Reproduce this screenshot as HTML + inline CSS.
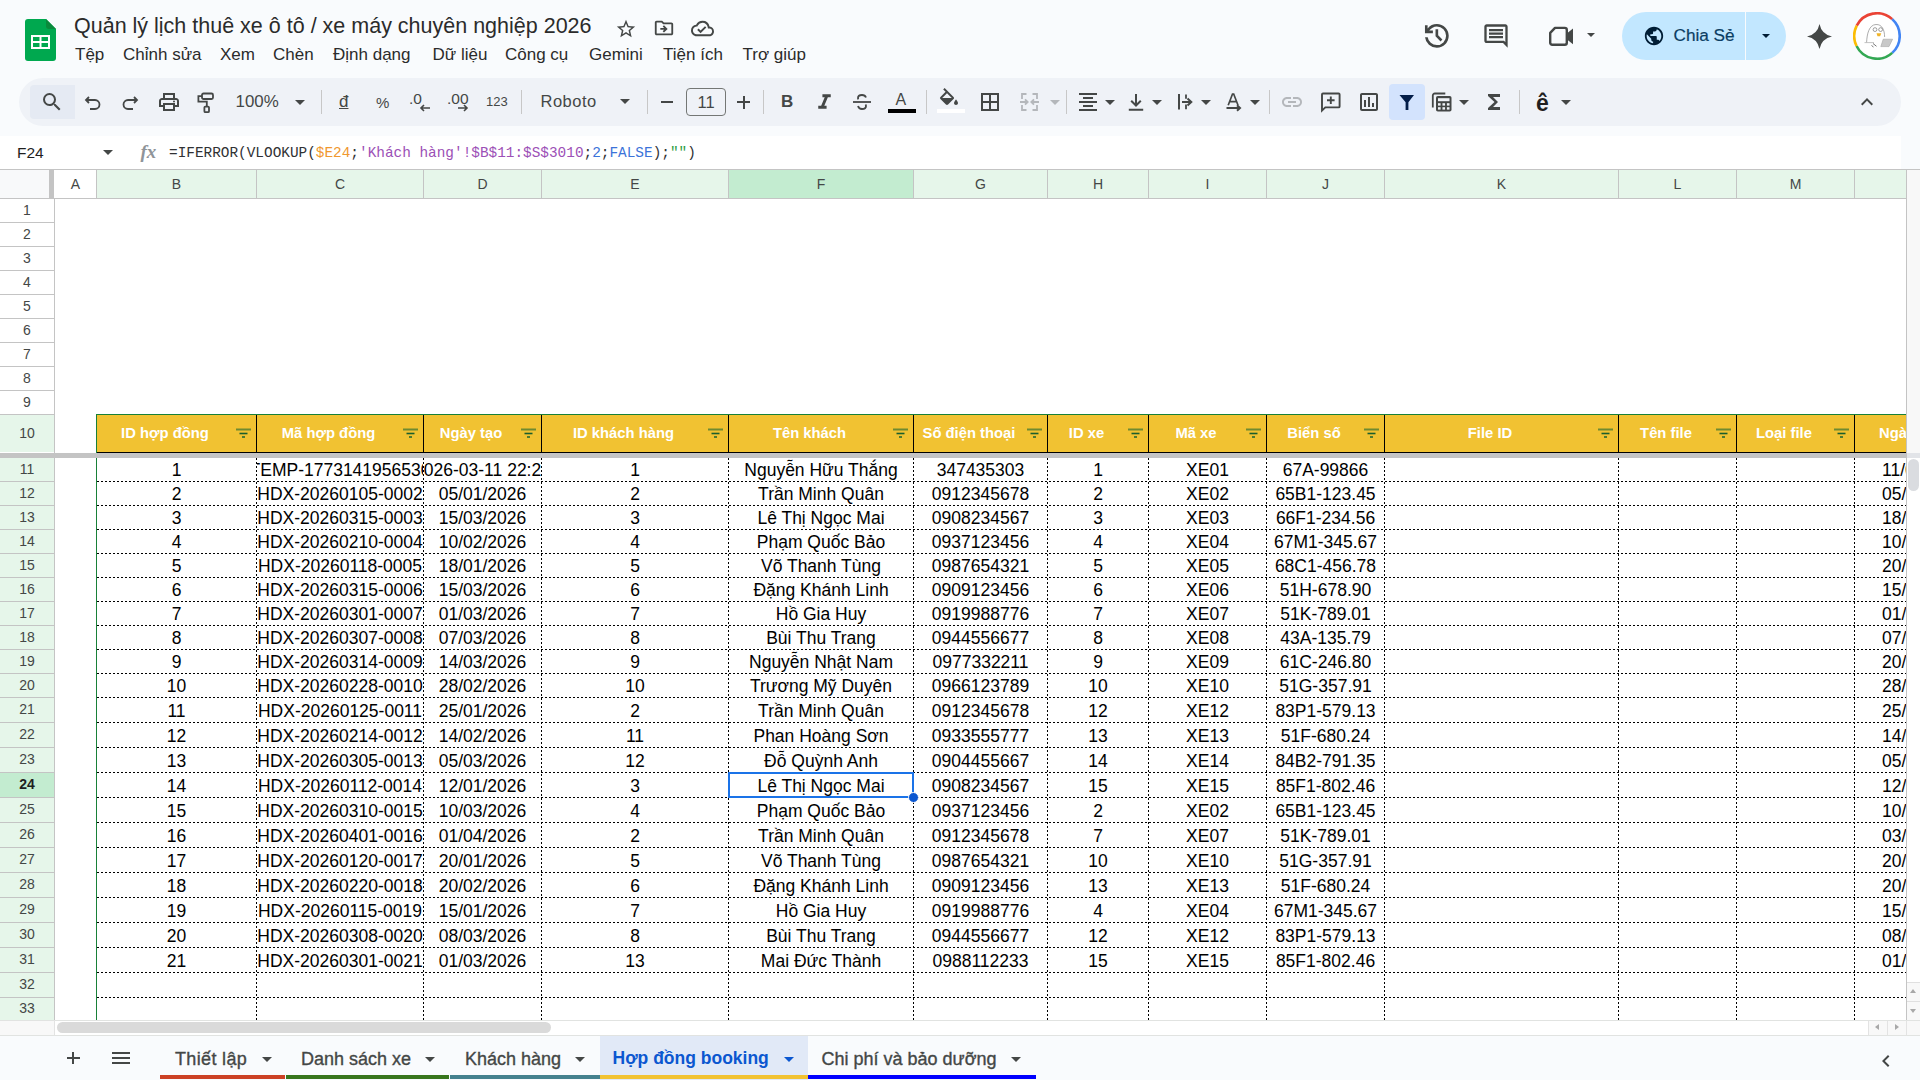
<!DOCTYPE html><html><head><meta charset="utf-8"><style>
*{margin:0;padding:0;box-sizing:border-box}
html,body{width:1920px;height:1080px;overflow:hidden;background:#f9fbfd;font-family:"Liberation Sans",sans-serif}
.t{position:absolute;white-space:nowrap;line-height:1}
.abs{position:absolute}
.c{position:absolute;overflow:hidden;white-space:nowrap;text-align:center;font-size:17.5px;color:#000;display:flex;align-items:center;justify-content:center}
.c span{display:block;flex:none;position:relative;top:1px}
.rh{position:absolute;left:0;width:54px;padding-bottom:2px;text-align:center;font-size:14px;color:#444746;display:flex;align-items:center;justify-content:center}
.ch{position:absolute;top:170px;height:28px;text-align:center;font-size:14px;color:#444746;display:flex;align-items:center;justify-content:center}
</style></head><body>

<svg class="abs" style="left:25px;top:19px" width="31" height="42" viewBox="0 0 31 42">
<path d="M3 0h18l10 10v29a3 3 0 0 1-3 3H3a3 3 0 0 1-3-3V3a3 3 0 0 1 3-3z" fill="#00a84f"/>
<path d="M21 0l10 10h-7a3 3 0 0 1-3-3z" fill="#0a8a3c"/>
<path d="M6 16h19v14H6z" fill="#fff"/>
<path d="M8 18h6.5v4H8zM16.5 18H23v4h-6.5zM8 24h6.5v4H8zM16.5 24H23v4h-6.5z" fill="#00a84f"/>
</svg>
<div class="t" style="left:74px;top:16.3px;font-size:21.5px;color:#2b2b2b;font-weight:normal;">Quản lý lịch thuê xe ô tô / xe máy chuyên nghiệp 2026</div>
<svg style="position:absolute;left:615px;top:18px" width="22" height="22" viewBox="0 0 24 24"><path fill="#444746" d="M22 9.24l-7.19-.62L12 2 9.19 8.63 2 9.24l5.46 4.73L5.82 21 12 17.27 18.18 21l-1.63-7.03L22 9.24zM12 15.4l-3.76 2.27 1-4.28-3.32-2.88 4.38-.38L12 6.1l1.71 4.04 4.38.38-3.32 2.88 1 4.28L12 15.4z"/></svg>
<svg style="position:absolute;left:653px;top:17px" width="22" height="22" viewBox="0 0 24 24"><path fill="#444746" d="M20 6h-8l-2-2H4c-1.1 0-1.99.9-1.99 2L2 18c0 1.1.9 2 2 2h16c1.1 0 2-.9 2-2V8c0-1.1-.9-2-2-2zm0 12H4V6h5.17l2 2H20v10zm-7.84-6H8v2h4.16l-1.59 1.59L11.99 17 16 13.01 11.99 9l-1.41 1.41L12.16 12z"/></svg>
<svg style="position:absolute;left:691px;top:17px" width="23" height="23" viewBox="0 0 24 24"><path fill="#444746" d="M19.35 10.04A7.49 7.49 0 0 0 12 4C9.11 4 6.6 5.64 5.35 8.04A5.994 5.994 0 0 0 0 14c0 3.31 2.69 6 6 6h13c2.76 0 5-2.24 5-5 0-2.64-2.05-4.78-4.65-4.96zM19 18H6c-2.21 0-4-1.79-4-4 0-2.05 1.53-3.76 3.56-3.97l1.07-.11.5-.95A5.469 5.469 0 0 1 12 6c2.62 0 4.88 1.86 5.39 4.43l.3 1.5 1.53.11A2.98 2.98 0 0 1 22 15c0 1.65-1.35 3-3 3zm-9-3.82l-2.09-2.09L6.5 13.5 10 17l6.01-6.01-1.41-1.41z"/></svg>
<div class="t" style="left:75px;top:46px;font-size:17px;color:#2b2b2b;font-weight:normal;">Tệp</div>
<div class="t" style="left:123px;top:46px;font-size:17px;color:#2b2b2b;font-weight:normal;">Chỉnh sửa</div>
<div class="t" style="left:220px;top:46px;font-size:17px;color:#2b2b2b;font-weight:normal;">Xem</div>
<div class="t" style="left:273px;top:46px;font-size:17px;color:#2b2b2b;font-weight:normal;">Chèn</div>
<div class="t" style="left:333px;top:46px;font-size:17px;color:#2b2b2b;font-weight:normal;">Định dạng</div>
<div class="t" style="left:432.5px;top:46px;font-size:17px;color:#2b2b2b;font-weight:normal;">Dữ liệu</div>
<div class="t" style="left:505px;top:46px;font-size:17px;color:#2b2b2b;font-weight:normal;">Công cụ</div>
<div class="t" style="left:589px;top:46px;font-size:17px;color:#2b2b2b;font-weight:normal;">Gemini</div>
<div class="t" style="left:663px;top:46px;font-size:17px;color:#2b2b2b;font-weight:normal;">Tiện ích</div>
<div class="t" style="left:742.5px;top:46px;font-size:17px;color:#2b2b2b;font-weight:normal;">Trợ giúp</div>
<svg class="abs" style="left:1421px;top:20px" width="31.7" height="31.7" viewBox="0 -960 960 960"><path fill="#444746" d="M480-120q-138 0-240.5-91.5T122-440h82q14 104 92.5 172T480-200q117 0 198.5-81.5T760-480q0-117-81.5-198.5T480-760q-69 0-129 32t-101 88h110v80H120v-240h80v94q51-64 124.5-99T480-840q75 0 140.5 28.5t114 77q48.5 48.5 77 114T840-480q0 75-28.5 140.5t-77 114q-48.5 48.5-114 77T480-120Zm112-192L440-464v-216h80v184l128 128-56 56Z"/></svg>
<svg style="position:absolute;left:1482px;top:22px" width="28" height="28" viewBox="0 0 24 24"><path fill="#444746" d="M21.99 4c0-1.1-.89-2-1.99-2H4c-1.1 0-2 .9-2 2v12c0 1.1.9 2 2 2h14l4 4-.01-18zM20 4v13.17L18.83 16H4V4h16zM6 12h12v2H6zm0-3h12v2H6zm0-3h12v2H6z"/></svg>
<svg style="position:absolute;left:1546px;top:21px" width="30" height="30" viewBox="0 0 24 24"><path fill="none" d="M18 10.48V6c0-1.1-.9-2-2-2H6.83l2 2H16v7.17l2 2v-1.65l4 3.98v-11l-4 3.98zM16 16L6 6 4.6 4.6 3.5 3.5 2.21 4.79 3 5.59V18c0 1.1.9 2 2 2h11c.28 0 .55-.06.79-.16l1.5 1.5 1.29-1.29L18 18.52 16 16zM5 18V7.59L15.41 18H5z"/></svg>
<svg class="abs" style="left:1546px;top:24px" width="30" height="24" viewBox="0 0 30 24"><path d="M9 3.9h9.8a2 2 0 0 1 2 2v12.9a2 2 0 0 1-2 2H6.2a2 2 0 0 1-2-2V8.9z" fill="none" stroke="#444746" stroke-width="2.4" stroke-linejoin="round"/><path d="M20.8 9.6 27 4.6v15.6l-6.2-5z" fill="#444746"/></svg>
<div style="position:absolute;left:1586.5px;top:32.75px;width:0;height:0;border-left:4.5px solid transparent;border-right:4.5px solid transparent;border-top:4.5px solid #444746"></div>
<div class="abs" style="left:1622px;top:12px;width:164px;height:48px;border-radius:24px;background:#c2e7ff"></div>
<div class="abs" style="left:1745px;top:12px;width:1px;height:48px;background:#f9fbfd"></div>
<svg style="position:absolute;left:1643px;top:25px" width="22" height="22" viewBox="0 0 24 24"><path fill="#001d35" d="M12 2C6.48 2 2 6.48 2 12s4.48 10 10 10 10-4.48 10-10S17.52 2 12 2zm-1 17.93c-3.95-.49-7-3.85-7-7.93 0-.62.08-1.21.21-1.79L9 15v1c0 1.1.9 2 2 2v1.93zm6.9-2.54c-.26-.81-1-1.39-1.9-1.39h-1v-3c0-.55-.45-1-1-1H8v-2h2c.55 0 1-.45 1-1V7h2c1.1 0 2-.9 2-2v-.41c2.93 1.19 5 4.06 5 7.41 0 2.08-.8 3.97-2.1 5.39z"/></svg>
<div class="t" style="left:1673.5px;top:27px;font-size:17.2px;color:#0b3d63;font-weight:normal;-webkit-text-stroke:0.2px #0b3d63">Chia Sẻ</div>
<div style="position:absolute;left:1761.5px;top:34.25px;width:0;height:0;border-left:4.5px solid transparent;border-right:4.5px solid transparent;border-top:4.5px solid #001d35"></div>
<svg class="abs" style="left:1807px;top:23.5px" width="25" height="25" viewBox="0 0 26 26"><path d="M13 0Q15.2 10.8 26 13Q15.2 15.2 13 26Q10.8 15.2 0 13Q10.8 10.8 13 0z" fill="#444746"/></svg>
<svg class="abs" style="left:1853px;top:12px" width="48" height="48" viewBox="0 0 48 48">
<circle cx="24" cy="24" r="21.5" fill="#fff"/>
<path d="M3.73 13.67A22.75 22.75 0 0 1 39.22 7.1" stroke="#ea4335" stroke-width="2.6" fill="none"/>
<path d="M39.22 7.1A22.75 22.75 0 0 1 39.22 40.9" stroke="#4285f4" stroke-width="2.6" fill="none"/>
<path d="M39.22 40.9A22.75 22.75 0 0 1 3.55 33.97" stroke="#34a853" stroke-width="2.6" fill="none"/>
<path d="M3.55 33.97A22.75 22.75 0 0 1 3.73 13.67" stroke="#fbbc04" stroke-width="2.6" fill="none"/>
<path d="M13.6 30.3C14 22 16 12.8 23 12.5 29 12.2 31.6 18 31.6 25" fill="none" stroke="#8a8a8a" stroke-width="0.7"/>
<path d="M11.5 30.6H21" stroke="#9a9a9a" stroke-width="0.6"/>
<circle cx="22" cy="17.6" r="1.9" fill="none" stroke="#777" stroke-width="0.7"/>
<circle cx="27.6" cy="17.6" r="1.9" fill="none" stroke="#777" stroke-width="0.7"/>
<path d="M23.5 21.2h4.8l-1.2 3h-2.6z" fill="#f0b429"/>
<path d="M30.2 27.2h9.4l-3.6 7.4h-8.2z" fill="#c8c8c8" stroke="#999" stroke-width="0.5"/>
<path d="M20 31.5l3.5 2.8M18.5 33.5l2 1.5" stroke="#666" stroke-width="0.9"/>
</svg>
<div class="abs" style="left:19px;top:78px;width:1882px;height:48px;border-radius:24px;background:#eff2f7"></div>
<div class="abs" style="left:30px;top:85px;width:45px;height:34px;border-radius:4px 0 0 4px;background:#e5eaf3"></div>
<svg style="position:absolute;left:40px;top:90px" width="24" height="24" viewBox="0 0 24 24"><path fill="#444746" d="M15.5 14h-.79l-.28-.27A6.471 6.471 0 0 0 16 9.5 6.5 6.5 0 1 0 9.5 16c1.61 0 3.09-.59 4.23-1.57l.27.28v.79l5 4.99L20.49 19l-4.99-5zm-6 0C7.01 14 5 11.99 5 9.5S7.01 5 9.5 5 14 7.01 14 9.5 11.99 14 9.5 14z"/></svg>
<svg class="abs" style="left:84px;top:95px" width="18" height="17" viewBox="0 0 18 17"><path d="M5 2L2 5l3 3" fill="none" stroke="#444746" stroke-width="1.8"/><path d="M2.5 5H11a4.5 4.5 0 0 1 0 9H6" fill="none" stroke="#444746" stroke-width="1.8"/></svg>
<svg class="abs" style="left:121px;top:95px" width="18" height="17" viewBox="0 0 18 17"><path d="M13 2l3 3-3 3" fill="none" stroke="#444746" stroke-width="1.8"/><path d="M15.5 5H7a4.5 4.5 0 0 0 0 9h5" fill="none" stroke="#444746" stroke-width="1.8"/></svg>
<svg style="position:absolute;left:157px;top:90px" width="24" height="24" viewBox="0 0 24 24"><path fill="#444746" d="M19 8h-1V3H6v5H5c-1.66 0-3 1.34-3 3v6h4v4h12v-4h4v-6c0-1.66-1.34-3-3-3zM8 5h8v3H8V5zm8 12v2H8v-4h8v2zm2-2v-2H6v2H4v-4c0-.55.45-1 1-1h14c.55 0 1 .45 1 1v4h-2z M18 11.5a1 1 0 1 1-2 0 1 1 0 0 1 2 0z"/></svg>
<svg class="abs" style="left:194px;top:88px" width="24" height="28" viewBox="0 0 24 28"><rect x="8" y="5.5" width="11" height="5.5" rx="1.5" fill="none" stroke="#444746" stroke-width="1.8"/><path d="M8 8.2H4.4v5.4h8.4v4.9" fill="none" stroke="#444746" stroke-width="1.8"/><rect x="10.4" y="18.6" width="4.6" height="5.6" rx="1" fill="none" stroke="#444746" stroke-width="1.8"/></svg>
<div class="t" style="left:235.5px;top:94px;font-size:16.9px;color:#444746;font-weight:normal;">100%</div>
<div style="position:absolute;left:295.0px;top:100.0px;width:0;height:0;border-left:5.0px solid transparent;border-right:5.0px solid transparent;border-top:5.0px solid #444746"></div>
<div class="abs" style="left:321px;top:90px;width:1px;height:24px;background:#c7c7c7"></div>
<div class="abs" style="left:521px;top:90px;width:1px;height:24px;background:#c7c7c7"></div>
<div class="abs" style="left:647px;top:90px;width:1px;height:24px;background:#c7c7c7"></div>
<div class="abs" style="left:763px;top:90px;width:1px;height:24px;background:#c7c7c7"></div>
<div class="abs" style="left:926px;top:90px;width:1px;height:24px;background:#c7c7c7"></div>
<div class="abs" style="left:1066px;top:90px;width:1px;height:24px;background:#c7c7c7"></div>
<div class="abs" style="left:1269px;top:90px;width:1px;height:24px;background:#c7c7c7"></div>
<div class="abs" style="left:1519px;top:90px;width:1px;height:24px;background:#c7c7c7"></div>
<div class="t" style="left:339px;top:93px;font-size:17px;color:#444746;font-weight:normal;"><span style="text-decoration:underline">đ</span></div>
<div class="t" style="left:376px;top:95px;font-size:15px;color:#444746;font-weight:normal;">%</div>
<div class="t" style="left:409px;top:91px;font-size:15.5px;color:#444746;font-weight:normal;">.0</div>
<svg class="abs" style="left:419px;top:103px" width="12" height="10" viewBox="0 0 12 10"><path d="M11 5H2M5 2L2 5l3 3" stroke="#444746" stroke-width="1.6" fill="none"/></svg>
<div class="t" style="left:447px;top:91px;font-size:15.5px;color:#444746;font-weight:normal;">.00</div>
<svg class="abs" style="left:457px;top:103px" width="12" height="10" viewBox="0 0 12 10"><path d="M1 5h9M7 2l3 3-3 3" stroke="#444746" stroke-width="1.6" fill="none"/></svg>
<div class="t" style="left:486px;top:95px;font-size:13px;color:#444746;font-weight:normal;">123</div>
<div class="t" style="left:540.5px;top:93px;font-size:16.5px;color:#444746;font-weight:normal;letter-spacing:0.5px">Roboto</div>
<div style="position:absolute;left:620.0px;top:99.0px;width:0;height:0;border-left:5.0px solid transparent;border-right:5.0px solid transparent;border-top:5.0px solid #444746"></div>
<div class="abs" style="left:661px;top:101px;width:12px;height:2px;background:#444746"></div>
<div class="abs" style="left:686px;top:88px;width:40px;height:28px;border:1px solid #747775;border-radius:4px"></div>
<div class="t" style="left:697.5px;top:94px;font-size:16.5px;color:#444746;font-weight:normal;">11</div>
<div class="abs" style="left:737px;top:101px;width:13px;height:2px;background:#444746"></div>
<div class="abs" style="left:742.5px;top:95.5px;width:2px;height:13px;background:#444746"></div>
<div class="t" style="left:781px;top:93px;font-size:17px;color:#444746;font-weight:bold;">B</div>
<svg style="position:absolute;left:812px;top:90.4px" width="25" height="25" viewBox="0 0 24 24"><path fill="#444746" d="M10 4v3h2.21l-3.42 8H6v3h8v-3h-2.21l3.42-8H18V4z"/></svg>
<svg class="abs" style="left:852px;top:92px" width="20" height="20" viewBox="0 0 20 20"><path d="M14 5.5c-.6-1.6-2-2.5-4-2.5-2.3 0-4 1.3-4 3 0 .5.1.9.3 1.3M6 14c.5 1.8 2 3 4 3 2.3 0 4-1.2 4-3 0-.6-.2-1.1-.5-1.5" stroke="#444746" stroke-width="1.8" fill="none"/><path d="M1 10h18" stroke="#444746" stroke-width="1.8"/></svg>
<div class="t" style="left:895.5px;top:92px;font-size:16px;color:#444746;font-weight:normal;">A</div>
<div class="abs" style="left:888px;top:109px;width:28px;height:4px;background:#000"></div>
<svg style="position:absolute;left:937px;top:88px" width="24" height="24" viewBox="0 0 24 24"><path fill="#444746" d="M16.56 8.94L7.62 0 6.21 1.41l2.38 2.38-5.15 5.15a1.49 1.49 0 0 0 0 2.12l5.5 5.5c.29.29.68.44 1.06.44s.77-.15 1.06-.44l5.5-5.5c.59-.58.59-1.53 0-2.12zM5.21 10L10 5.21 14.79 10H5.21zM19 11.5s-2 2.17-2 3.5c0 1.1.9 2 2 2s2-.9 2-2c0-1.33-2-3.5-2-3.5z"/></svg>
<div class="abs" style="left:937px;top:109px;width:28px;height:4px;background:#fff"></div>
<svg style="position:absolute;left:978px;top:90px" width="24" height="24" viewBox="0 0 24 24"><path fill="#444746" d="M3 3v18h18V3H3zm8 16H5v-6h6v6zm0-8H5V5h6v6zm8 8h-6v-6h6v6zm0-8h-6V5h6v6z"/></svg>
<svg class="abs" style="left:1018px;top:92px" width="24" height="20" viewBox="0 0 24 20"><path d="M4 7V2h4.5M4 13v5h4.5M19 7V2h-4.5M19 13v5h-4.5M2 10h7.5M7 7.3l2.7 2.7-2.7 2.7M21 10h-7.5M16 7.3l-2.7 2.7 2.7 2.7" fill="none" stroke="#b4b7bb" stroke-width="1.8"/></svg>
<div style="position:absolute;left:1050.0px;top:99.5px;width:0;height:0;border-left:5.0px solid transparent;border-right:5.0px solid transparent;border-top:5.0px solid #b4b7bb"></div>
<svg style="position:absolute;left:1076px;top:90px" width="24" height="24" viewBox="0 0 24 24"><path fill="#444746" d="M7 15v2h10v-2H7zm-4 6h18v-2H3v2zm0-8h18v-2H3v2zm4-6v2h10V7H7zM3 3v2h18V3H3z"/></svg>
<div style="position:absolute;left:1105.0px;top:99.5px;width:0;height:0;border-left:5.0px solid transparent;border-right:5.0px solid transparent;border-top:5.0px solid #444746"></div>
<svg class="abs" style="left:1124px;top:90px" width="24" height="24" viewBox="0 0 24 24"><path d="M12 4v11.5M7.2 10.8 12 15.5l4.8-4.7M4.8 19.8h14.4" fill="none" stroke="#444746" stroke-width="2"/></svg>
<div style="position:absolute;left:1152.0px;top:99.5px;width:0;height:0;border-left:5.0px solid transparent;border-right:5.0px solid transparent;border-top:5.0px solid #444746"></div>
<svg class="abs" style="left:1174px;top:90px" width="24" height="24" viewBox="0 0 24 24"><path d="M5 4v15.5" stroke="#444746" stroke-width="2"/><path d="M12 4.5v4.3M12 14.5v4.8" stroke="#444746" stroke-width="1.8"/><path d="M8 12h8.5M13.5 8.5 17.3 12l-3.8 3.5" fill="none" stroke="#444746" stroke-width="2"/></svg>
<div style="position:absolute;left:1201.0px;top:99.5px;width:0;height:0;border-left:5.0px solid transparent;border-right:5.0px solid transparent;border-top:5.0px solid #444746"></div>
<svg class="abs" style="left:1224px;top:90px" width="22" height="24" viewBox="0 0 22 24"><path d="M4.2 15.2 8.5 4h1.2l4.3 11.2M5.6 11.6h7" fill="none" stroke="#444746" stroke-width="1.7"/><path d="M2.5 18h12.5M13 15.3l3 2.7-3 2.7" fill="none" stroke="#444746" stroke-width="2"/></svg>
<div style="position:absolute;left:1250.0px;top:99.5px;width:0;height:0;border-left:5.0px solid transparent;border-right:5.0px solid transparent;border-top:5.0px solid #444746"></div>
<svg style="position:absolute;left:1280px;top:90px" width="24" height="24" viewBox="0 0 24 24"><path fill="#b4b7bb" d="M3.9 12c0-1.71 1.39-3.1 3.1-3.1h4V7H7c-2.76 0-5 2.24-5 5s2.24 5 5 5h4v-1.9H7c-1.71 0-3.1-1.39-3.1-3.1zM8 13h8v-2H8v2zm9-6h-4v1.9h4c1.71 0 3.1 1.39 3.1 3.1s-1.39 3.1-3.1 3.1h-4V17h4c2.76 0 5-2.24 5-5s-2.24-5-5-5z"/></svg>
<svg class="abs" style="left:1318px;top:90px" width="26" height="24" viewBox="0 0 26 24"><path d="M5 3.5h15.6a1 1 0 0 1 1 1v11.9a1 1 0 0 1-1 1H7.3L4 20.6V4.5a1 1 0 0 1 1-1z" fill="none" stroke="#444746" stroke-width="1.9"/><path d="M12.8 6.5v7.5M9 10.2h7.6" stroke="#444746" stroke-width="1.9"/></svg>
<svg style="position:absolute;left:1357px;top:90px" width="24" height="24" viewBox="0 0 24 24"><path fill="#444746" d="M19 3H5c-1.1 0-2 .9-2 2v14c0 1.1.9 2 2 2h14c1.1 0 2-.9 2-2V5c0-1.1-.9-2-2-2zm0 16H5V5h14v14zM7 10h2v7H7zm4-3h2v10h-2zm4 6h2v4h-2z"/></svg>
<div class="abs" style="left:1389px;top:84px;width:36px;height:36px;border-radius:4px;background:#d3e3fd"></div>
<svg class="abs" style="left:1397px;top:93px" width="20" height="18" viewBox="0 0 20 18"><path d="M2.5 2h14.5l-5.6 7.2V17H8.6V9.2z" fill="#041e49"/></svg>
<svg class="abs" style="left:1430px;top:91px" width="24" height="22" viewBox="0 0 24 22"><path d="M2.8 16.5V4.5a2 2 0 0 1 2-2h10.5" fill="none" stroke="#444746" stroke-width="1.8"/><rect x="6" y="5" width="15.5" height="15.5" rx="1.8" fill="#444746"/><rect x="8" y="7.2" width="11.5" height="3" fill="#eff2f7"/><rect x="8" y="12.2" width="2.6" height="2.4" fill="#eff2f7"/><rect x="12.45" y="12.2" width="2.6" height="2.4" fill="#eff2f7"/><rect x="16.9" y="12.2" width="2.6" height="2.4" fill="#eff2f7"/><rect x="8" y="16.2" width="2.6" height="2.4" fill="#eff2f7"/><rect x="12.45" y="16.2" width="2.6" height="2.4" fill="#eff2f7"/><rect x="16.9" y="16.2" width="2.6" height="2.4" fill="#eff2f7"/></svg>
<div style="position:absolute;left:1459.0px;top:99.5px;width:0;height:0;border-left:5.0px solid transparent;border-right:5.0px solid transparent;border-top:5.0px solid #444746"></div>
<svg style="position:absolute;left:1482px;top:90px" width="24" height="24" viewBox="0 0 24 24"><path fill="#444746" d="M18 4H6v2l6.5 6L6 18v2h12v-3h-7l5-5-5-5h7z"/></svg>
<div class="t" style="left:1536px;top:91.5px;font-size:23px;color:#1f1f1f;font-weight:bold;">ê</div>
<div style="position:absolute;left:1561.0px;top:99.5px;width:0;height:0;border-left:5.0px solid transparent;border-right:5.0px solid transparent;border-top:5.0px solid #444746"></div>
<svg style="position:absolute;left:1855px;top:90px" width="24" height="24" viewBox="0 0 24 24"><path fill="#444746" d="M12 8l-6 6 1.41 1.41L12 10.83l4.59 4.58L18 14z"/></svg>
<div class="abs" style="left:0;top:136px;width:1901px;height:33px;background:#fff"></div>
<div class="t" style="left:17px;top:145px;font-size:15.5px;color:#1f1f1f;font-weight:normal;">F24</div>
<div style="position:absolute;left:102.5px;top:150.0px;width:0;height:0;border-left:5.0px solid transparent;border-right:5.0px solid transparent;border-top:5.0px solid #444746"></div>
<div class="t" style="left:140.5px;top:142px;font-size:19px;color:#8f9499;font-weight:bold;font-family:'Liberation Serif',serif"><i>fx</i></div>
<div class="t" style="left:169px;top:145.7px;font-size:14.4px;color:#1f1f1f;font-weight:normal;font-family:'Liberation Mono',monospace"><span style="color:#303134">=IFERROR(VLOOKUP(</span><span style="color:#f0982f">$E24</span><span style="color:#303134">;</span><span style="color:#9c50b6">'Khách hàng'!$B$11:$S$3010</span><span style="color:#303134">;</span><span style="color:#3b73d9">2</span><span style="color:#303134">;</span><span style="color:#3b73d9">FALSE</span><span style="color:#303134">);</span><span style="color:#2f9e44">""</span><span style="color:#303134">)</span></div>
<div class="abs" style="left:0;top:169px;width:1906px;height:851px;background:#fff"></div>
<div class="abs" style="left:0;top:170px;width:49px;height:28px;background:#f8f9fa"></div>
<div class="abs" style="left:49px;top:170px;width:5px;height:28px;background:#c4c4c4"></div>
<div class="abs" style="left:0;top:169px;width:1920px;height:1px;background:#c4c4c4"></div>
<div class="abs" style="left:0;top:198px;width:1906px;height:1px;background:#c4c4c4"></div>
<div class="ch" style="left:55px;width:41px;background:#fff">A</div>
<div class="abs" style="left:96px;top:170px;width:1px;height:28px;background:#c4c4c4"></div>
<div class="ch" style="left:97px;width:159px;background:#e6f6ea">B</div>
<div class="abs" style="left:256px;top:170px;width:1px;height:28px;background:#c4c4c4"></div>
<div class="ch" style="left:257px;width:166px;background:#e6f6ea">C</div>
<div class="abs" style="left:423px;top:170px;width:1px;height:28px;background:#c4c4c4"></div>
<div class="ch" style="left:424px;width:117px;background:#e6f6ea">D</div>
<div class="abs" style="left:541px;top:170px;width:1px;height:28px;background:#c4c4c4"></div>
<div class="ch" style="left:542px;width:186px;background:#e6f6ea">E</div>
<div class="abs" style="left:728px;top:170px;width:1px;height:28px;background:#c4c4c4"></div>
<div class="ch" style="left:729px;width:184px;background:#c3ecd0">F</div>
<div class="abs" style="left:913px;top:170px;width:1px;height:28px;background:#c4c4c4"></div>
<div class="ch" style="left:914px;width:133px;background:#e6f6ea">G</div>
<div class="abs" style="left:1047px;top:170px;width:1px;height:28px;background:#c4c4c4"></div>
<div class="ch" style="left:1048px;width:100px;background:#e6f6ea">H</div>
<div class="abs" style="left:1148px;top:170px;width:1px;height:28px;background:#c4c4c4"></div>
<div class="ch" style="left:1149px;width:117px;background:#e6f6ea">I</div>
<div class="abs" style="left:1266px;top:170px;width:1px;height:28px;background:#c4c4c4"></div>
<div class="ch" style="left:1267px;width:117px;background:#e6f6ea">J</div>
<div class="abs" style="left:1384px;top:170px;width:1px;height:28px;background:#c4c4c4"></div>
<div class="ch" style="left:1385px;width:233px;background:#e6f6ea">K</div>
<div class="abs" style="left:1618px;top:170px;width:1px;height:28px;background:#c4c4c4"></div>
<div class="ch" style="left:1619px;width:117px;background:#e6f6ea">L</div>
<div class="abs" style="left:1736px;top:170px;width:1px;height:28px;background:#c4c4c4"></div>
<div class="ch" style="left:1737px;width:117px;background:#e6f6ea">M</div>
<div class="abs" style="left:1854px;top:170px;width:1px;height:28px;background:#c4c4c4"></div>
<div class="ch" style="left:1855px;width:51px;background:#e6f6ea"></div>
<div class="abs" style="left:1906px;top:170px;width:1px;height:28px;background:#c4c4c4"></div>
<div class="rh" style="top:199px;height:23px;background:#fff;font-weight:normal;color:#444746">1</div>
<div class="abs" style="left:0;top:222px;width:54px;height:1px;background:#c4c4c4"></div>
<div class="rh" style="top:223px;height:23px;background:#fff;font-weight:normal;color:#444746">2</div>
<div class="abs" style="left:0;top:246px;width:54px;height:1px;background:#c4c4c4"></div>
<div class="rh" style="top:247px;height:23px;background:#fff;font-weight:normal;color:#444746">3</div>
<div class="abs" style="left:0;top:270px;width:54px;height:1px;background:#c4c4c4"></div>
<div class="rh" style="top:271px;height:23px;background:#fff;font-weight:normal;color:#444746">4</div>
<div class="abs" style="left:0;top:294px;width:54px;height:1px;background:#c4c4c4"></div>
<div class="rh" style="top:295px;height:23px;background:#fff;font-weight:normal;color:#444746">5</div>
<div class="abs" style="left:0;top:318px;width:54px;height:1px;background:#c4c4c4"></div>
<div class="rh" style="top:319px;height:23px;background:#fff;font-weight:normal;color:#444746">6</div>
<div class="abs" style="left:0;top:342px;width:54px;height:1px;background:#c4c4c4"></div>
<div class="rh" style="top:343px;height:23px;background:#fff;font-weight:normal;color:#444746">7</div>
<div class="abs" style="left:0;top:366px;width:54px;height:1px;background:#c4c4c4"></div>
<div class="rh" style="top:367px;height:23px;background:#fff;font-weight:normal;color:#444746">8</div>
<div class="abs" style="left:0;top:390px;width:54px;height:1px;background:#c4c4c4"></div>
<div class="rh" style="top:391px;height:23px;background:#fff;font-weight:normal;color:#444746">9</div>
<div class="abs" style="left:0;top:414px;width:54px;height:1px;background:#c4c4c4"></div>
<div class="rh" style="top:415px;height:37px;background:#e6f6ea;font-weight:normal;color:#444746">10</div>
<div class="rh" style="top:458px;height:23px;background:#e6f6ea;font-weight:normal;color:#444746">11</div>
<div class="abs" style="left:0;top:481px;width:54px;height:1px;background:#c4c4c4"></div>
<div class="rh" style="top:482px;height:23px;background:#e6f6ea;font-weight:normal;color:#444746">12</div>
<div class="abs" style="left:0;top:505px;width:54px;height:1px;background:#c4c4c4"></div>
<div class="rh" style="top:506px;height:23px;background:#e6f6ea;font-weight:normal;color:#444746">13</div>
<div class="abs" style="left:0;top:529px;width:54px;height:1px;background:#c4c4c4"></div>
<div class="rh" style="top:530px;height:23px;background:#e6f6ea;font-weight:normal;color:#444746">14</div>
<div class="abs" style="left:0;top:553px;width:54px;height:1px;background:#c4c4c4"></div>
<div class="rh" style="top:554px;height:23px;background:#e6f6ea;font-weight:normal;color:#444746">15</div>
<div class="abs" style="left:0;top:577px;width:54px;height:1px;background:#c4c4c4"></div>
<div class="rh" style="top:578px;height:23px;background:#e6f6ea;font-weight:normal;color:#444746">16</div>
<div class="abs" style="left:0;top:601px;width:54px;height:1px;background:#c4c4c4"></div>
<div class="rh" style="top:602px;height:23px;background:#e6f6ea;font-weight:normal;color:#444746">17</div>
<div class="abs" style="left:0;top:625px;width:54px;height:1px;background:#c4c4c4"></div>
<div class="rh" style="top:626px;height:23px;background:#e6f6ea;font-weight:normal;color:#444746">18</div>
<div class="abs" style="left:0;top:649px;width:54px;height:1px;background:#c4c4c4"></div>
<div class="rh" style="top:650px;height:23px;background:#e6f6ea;font-weight:normal;color:#444746">19</div>
<div class="abs" style="left:0;top:673px;width:54px;height:1px;background:#c4c4c4"></div>
<div class="rh" style="top:674px;height:23px;background:#e6f6ea;font-weight:normal;color:#444746">20</div>
<div class="abs" style="left:0;top:697px;width:54px;height:1px;background:#c4c4c4"></div>
<div class="rh" style="top:698px;height:24px;background:#e6f6ea;font-weight:normal;color:#444746">21</div>
<div class="abs" style="left:0;top:722px;width:54px;height:1px;background:#c4c4c4"></div>
<div class="rh" style="top:723px;height:24px;background:#e6f6ea;font-weight:normal;color:#444746">22</div>
<div class="abs" style="left:0;top:747px;width:54px;height:1px;background:#c4c4c4"></div>
<div class="rh" style="top:748px;height:24px;background:#e6f6ea;font-weight:normal;color:#444746">23</div>
<div class="abs" style="left:0;top:772px;width:54px;height:1px;background:#c4c4c4"></div>
<div class="rh" style="top:773px;height:24px;background:#c3ecd0;font-weight:bold;color:#1f1f1f">24</div>
<div class="abs" style="left:0;top:797px;width:54px;height:1px;background:#c4c4c4"></div>
<div class="rh" style="top:798px;height:24px;background:#e6f6ea;font-weight:normal;color:#444746">25</div>
<div class="abs" style="left:0;top:822px;width:54px;height:1px;background:#c4c4c4"></div>
<div class="rh" style="top:823px;height:24px;background:#e6f6ea;font-weight:normal;color:#444746">26</div>
<div class="abs" style="left:0;top:847px;width:54px;height:1px;background:#c4c4c4"></div>
<div class="rh" style="top:848px;height:24px;background:#e6f6ea;font-weight:normal;color:#444746">27</div>
<div class="abs" style="left:0;top:872px;width:54px;height:1px;background:#c4c4c4"></div>
<div class="rh" style="top:873px;height:24px;background:#e6f6ea;font-weight:normal;color:#444746">28</div>
<div class="abs" style="left:0;top:897px;width:54px;height:1px;background:#c4c4c4"></div>
<div class="rh" style="top:898px;height:24px;background:#e6f6ea;font-weight:normal;color:#444746">29</div>
<div class="abs" style="left:0;top:922px;width:54px;height:1px;background:#c4c4c4"></div>
<div class="rh" style="top:923px;height:24px;background:#e6f6ea;font-weight:normal;color:#444746">30</div>
<div class="abs" style="left:0;top:947px;width:54px;height:1px;background:#c4c4c4"></div>
<div class="rh" style="top:948px;height:24px;background:#e6f6ea;font-weight:normal;color:#444746">31</div>
<div class="abs" style="left:0;top:972px;width:54px;height:1px;background:#c4c4c4"></div>
<div class="rh" style="top:973px;height:24px;background:#e6f6ea;font-weight:normal;color:#444746">32</div>
<div class="abs" style="left:0;top:997px;width:54px;height:1px;background:#c4c4c4"></div>
<div class="rh" style="top:998px;height:22px;background:#e6f6ea;font-weight:normal;color:#444746">33</div>
<div class="abs" style="left:54px;top:199px;width:1px;height:821px;background:#c4c4c4"></div>
<div class="abs" style="left:97px;top:415px;width:159px;height:37px;background:#f1c232"></div>
<div class="abs" style="left:97px;top:415px;width:136px;height:37px;overflow:hidden;display:flex;align-items:center;justify-content:center;color:#fff;font-weight:bold;font-size:14.8px;white-space:nowrap"><span style="flex:none;position:relative;top:-1px">ID hợp đồng</span></div>
<svg class="abs" style="left:236px;top:428px" width="16" height="11" viewBox="0 0 16 11"><path d="M0 1.5h15" stroke="#6f8a30" stroke-width="2"/><path d="M3.5 5.5h8" stroke="#1b5e2c" stroke-width="1.6"/><path d="M6 9h3" stroke="#2a6a30" stroke-width="1.6"/></svg>
<div class="abs" style="left:256px;top:415px;width:1px;height:37px;background:#000"></div>
<div class="abs" style="left:257px;top:415px;width:166px;height:37px;background:#f1c232"></div>
<div class="abs" style="left:257px;top:415px;width:143px;height:37px;overflow:hidden;display:flex;align-items:center;justify-content:center;color:#fff;font-weight:bold;font-size:14.8px;white-space:nowrap"><span style="flex:none;position:relative;top:-1px">Mã hợp đồng</span></div>
<svg class="abs" style="left:403px;top:428px" width="16" height="11" viewBox="0 0 16 11"><path d="M0 1.5h15" stroke="#6f8a30" stroke-width="2"/><path d="M3.5 5.5h8" stroke="#1b5e2c" stroke-width="1.6"/><path d="M6 9h3" stroke="#2a6a30" stroke-width="1.6"/></svg>
<div class="abs" style="left:423px;top:415px;width:1px;height:37px;background:#000"></div>
<div class="abs" style="left:424px;top:415px;width:117px;height:37px;background:#f1c232"></div>
<div class="abs" style="left:424px;top:415px;width:94px;height:37px;overflow:hidden;display:flex;align-items:center;justify-content:center;color:#fff;font-weight:bold;font-size:14.8px;white-space:nowrap"><span style="flex:none;position:relative;top:-1px">Ngày tạo</span></div>
<svg class="abs" style="left:521px;top:428px" width="16" height="11" viewBox="0 0 16 11"><path d="M0 1.5h15" stroke="#6f8a30" stroke-width="2"/><path d="M3.5 5.5h8" stroke="#1b5e2c" stroke-width="1.6"/><path d="M6 9h3" stroke="#2a6a30" stroke-width="1.6"/></svg>
<div class="abs" style="left:541px;top:415px;width:1px;height:37px;background:#000"></div>
<div class="abs" style="left:542px;top:415px;width:186px;height:37px;background:#f1c232"></div>
<div class="abs" style="left:542px;top:415px;width:163px;height:37px;overflow:hidden;display:flex;align-items:center;justify-content:center;color:#fff;font-weight:bold;font-size:14.8px;white-space:nowrap"><span style="flex:none;position:relative;top:-1px">ID khách hàng</span></div>
<svg class="abs" style="left:708px;top:428px" width="16" height="11" viewBox="0 0 16 11"><path d="M0 1.5h15" stroke="#6f8a30" stroke-width="2"/><path d="M3.5 5.5h8" stroke="#1b5e2c" stroke-width="1.6"/><path d="M6 9h3" stroke="#2a6a30" stroke-width="1.6"/></svg>
<div class="abs" style="left:728px;top:415px;width:1px;height:37px;background:#000"></div>
<div class="abs" style="left:729px;top:415px;width:184px;height:37px;background:#f1c232"></div>
<div class="abs" style="left:729px;top:415px;width:161px;height:37px;overflow:hidden;display:flex;align-items:center;justify-content:center;color:#fff;font-weight:bold;font-size:14.8px;white-space:nowrap"><span style="flex:none;position:relative;top:-1px">Tên khách</span></div>
<svg class="abs" style="left:893px;top:428px" width="16" height="11" viewBox="0 0 16 11"><path d="M0 1.5h15" stroke="#6f8a30" stroke-width="2"/><path d="M3.5 5.5h8" stroke="#1b5e2c" stroke-width="1.6"/><path d="M6 9h3" stroke="#2a6a30" stroke-width="1.6"/></svg>
<div class="abs" style="left:913px;top:415px;width:1px;height:37px;background:#000"></div>
<div class="abs" style="left:914px;top:415px;width:133px;height:37px;background:#f1c232"></div>
<div class="abs" style="left:914px;top:415px;width:110px;height:37px;overflow:hidden;display:flex;align-items:center;justify-content:center;color:#fff;font-weight:bold;font-size:14.8px;white-space:nowrap"><span style="flex:none;position:relative;top:-1px">Số điện thoại</span></div>
<svg class="abs" style="left:1027px;top:428px" width="16" height="11" viewBox="0 0 16 11"><path d="M0 1.5h15" stroke="#6f8a30" stroke-width="2"/><path d="M3.5 5.5h8" stroke="#1b5e2c" stroke-width="1.6"/><path d="M6 9h3" stroke="#2a6a30" stroke-width="1.6"/></svg>
<div class="abs" style="left:1047px;top:415px;width:1px;height:37px;background:#000"></div>
<div class="abs" style="left:1048px;top:415px;width:100px;height:37px;background:#f1c232"></div>
<div class="abs" style="left:1048px;top:415px;width:77px;height:37px;overflow:hidden;display:flex;align-items:center;justify-content:center;color:#fff;font-weight:bold;font-size:14.8px;white-space:nowrap"><span style="flex:none;position:relative;top:-1px">ID xe</span></div>
<svg class="abs" style="left:1128px;top:428px" width="16" height="11" viewBox="0 0 16 11"><path d="M0 1.5h15" stroke="#6f8a30" stroke-width="2"/><path d="M3.5 5.5h8" stroke="#1b5e2c" stroke-width="1.6"/><path d="M6 9h3" stroke="#2a6a30" stroke-width="1.6"/></svg>
<div class="abs" style="left:1148px;top:415px;width:1px;height:37px;background:#000"></div>
<div class="abs" style="left:1149px;top:415px;width:117px;height:37px;background:#f1c232"></div>
<div class="abs" style="left:1149px;top:415px;width:94px;height:37px;overflow:hidden;display:flex;align-items:center;justify-content:center;color:#fff;font-weight:bold;font-size:14.8px;white-space:nowrap"><span style="flex:none;position:relative;top:-1px">Mã xe</span></div>
<svg class="abs" style="left:1246px;top:428px" width="16" height="11" viewBox="0 0 16 11"><path d="M0 1.5h15" stroke="#6f8a30" stroke-width="2"/><path d="M3.5 5.5h8" stroke="#1b5e2c" stroke-width="1.6"/><path d="M6 9h3" stroke="#2a6a30" stroke-width="1.6"/></svg>
<div class="abs" style="left:1266px;top:415px;width:1px;height:37px;background:#000"></div>
<div class="abs" style="left:1267px;top:415px;width:117px;height:37px;background:#f1c232"></div>
<div class="abs" style="left:1267px;top:415px;width:94px;height:37px;overflow:hidden;display:flex;align-items:center;justify-content:center;color:#fff;font-weight:bold;font-size:14.8px;white-space:nowrap"><span style="flex:none;position:relative;top:-1px">Biển số</span></div>
<svg class="abs" style="left:1364px;top:428px" width="16" height="11" viewBox="0 0 16 11"><path d="M0 1.5h15" stroke="#6f8a30" stroke-width="2"/><path d="M3.5 5.5h8" stroke="#1b5e2c" stroke-width="1.6"/><path d="M6 9h3" stroke="#2a6a30" stroke-width="1.6"/></svg>
<div class="abs" style="left:1384px;top:415px;width:1px;height:37px;background:#000"></div>
<div class="abs" style="left:1385px;top:415px;width:233px;height:37px;background:#f1c232"></div>
<div class="abs" style="left:1385px;top:415px;width:210px;height:37px;overflow:hidden;display:flex;align-items:center;justify-content:center;color:#fff;font-weight:bold;font-size:14.8px;white-space:nowrap"><span style="flex:none;position:relative;top:-1px">File ID</span></div>
<svg class="abs" style="left:1598px;top:428px" width="16" height="11" viewBox="0 0 16 11"><path d="M0 1.5h15" stroke="#6f8a30" stroke-width="2"/><path d="M3.5 5.5h8" stroke="#1b5e2c" stroke-width="1.6"/><path d="M6 9h3" stroke="#2a6a30" stroke-width="1.6"/></svg>
<div class="abs" style="left:1618px;top:415px;width:1px;height:37px;background:#000"></div>
<div class="abs" style="left:1619px;top:415px;width:117px;height:37px;background:#f1c232"></div>
<div class="abs" style="left:1619px;top:415px;width:94px;height:37px;overflow:hidden;display:flex;align-items:center;justify-content:center;color:#fff;font-weight:bold;font-size:14.8px;white-space:nowrap"><span style="flex:none;position:relative;top:-1px">Tên file</span></div>
<svg class="abs" style="left:1716px;top:428px" width="16" height="11" viewBox="0 0 16 11"><path d="M0 1.5h15" stroke="#6f8a30" stroke-width="2"/><path d="M3.5 5.5h8" stroke="#1b5e2c" stroke-width="1.6"/><path d="M6 9h3" stroke="#2a6a30" stroke-width="1.6"/></svg>
<div class="abs" style="left:1736px;top:415px;width:1px;height:37px;background:#000"></div>
<div class="abs" style="left:1737px;top:415px;width:117px;height:37px;background:#f1c232"></div>
<div class="abs" style="left:1737px;top:415px;width:94px;height:37px;overflow:hidden;display:flex;align-items:center;justify-content:center;color:#fff;font-weight:bold;font-size:14.8px;white-space:nowrap"><span style="flex:none;position:relative;top:-1px">Loại file</span></div>
<svg class="abs" style="left:1834px;top:428px" width="16" height="11" viewBox="0 0 16 11"><path d="M0 1.5h15" stroke="#6f8a30" stroke-width="2"/><path d="M3.5 5.5h8" stroke="#1b5e2c" stroke-width="1.6"/><path d="M6 9h3" stroke="#2a6a30" stroke-width="1.6"/></svg>
<div class="abs" style="left:1854px;top:415px;width:1px;height:37px;background:#000"></div>
<div class="abs" style="left:1855px;top:415px;width:51px;height:37px;background:#f1c232"></div>
<div class="abs" style="left:1855px;top:415px;width:51px;height:37px;overflow:hidden;display:flex;align-items:center;justify-content:flex-start;color:#fff;font-weight:bold;font-size:14.8px;white-space:nowrap"><span style="flex:none;padding-left:24px;position:relative;top:-1px">Ngày</span></div>
<div class="abs" style="left:96px;top:452px;width:1810px;height:1px;background:#000"></div>
<div class="abs" style="left:96px;top:414px;width:1810px;height:1px;background:#188038"></div>
<div class="abs" style="left:0;top:453px;width:1906px;height:5px;background:#c4c4c4"></div>
<div class="abs" style="left:96px;top:414px;width:1px;height:39px;background:#188038"></div>
<div class="abs" style="left:96px;top:458px;width:1px;height:562px;background:#188038"></div>
<div class="c" style="left:97px;top:458px;width:159px;height:23px"><span>1</span></div>
<div class="c" style="left:257px;top:458px;width:166px;height:23px"><span>TEMP-1773141956530</span></div>
<div class="c" style="left:424px;top:458px;width:117px;height:23px"><span>2026-03-11 22:26</span></div>
<div class="c" style="left:542px;top:458px;width:186px;height:23px"><span>1</span></div>
<div class="c" style="left:729px;top:458px;width:184px;height:23px"><span>Nguyễn Hữu Thắng</span></div>
<div class="c" style="left:914px;top:458px;width:133px;height:23px"><span>347435303</span></div>
<div class="c" style="left:1048px;top:458px;width:100px;height:23px"><span>1</span></div>
<div class="c" style="left:1149px;top:458px;width:117px;height:23px"><span>XE01</span></div>
<div class="c" style="left:1267px;top:458px;width:117px;height:23px"><span>67A-99866</span></div>
<div class="c" style="left:1855px;top:458px;width:51px;height:23px;justify-content:flex-start"><span style="padding-left:27px">11/03/2026</span></div>
<div class="c" style="left:97px;top:482px;width:159px;height:23px"><span>2</span></div>
<div class="c" style="left:257px;top:482px;width:166px;height:23px"><span>HDX-20260105-0002</span></div>
<div class="c" style="left:424px;top:482px;width:117px;height:23px"><span>05/01/2026</span></div>
<div class="c" style="left:542px;top:482px;width:186px;height:23px"><span>2</span></div>
<div class="c" style="left:729px;top:482px;width:184px;height:23px"><span>Trần Minh Quân</span></div>
<div class="c" style="left:914px;top:482px;width:133px;height:23px"><span>0912345678</span></div>
<div class="c" style="left:1048px;top:482px;width:100px;height:23px"><span>2</span></div>
<div class="c" style="left:1149px;top:482px;width:117px;height:23px"><span>XE02</span></div>
<div class="c" style="left:1267px;top:482px;width:117px;height:23px"><span>65B1-123.45</span></div>
<div class="c" style="left:1855px;top:482px;width:51px;height:23px;justify-content:flex-start"><span style="padding-left:27px">05/01/2026</span></div>
<div class="c" style="left:97px;top:506px;width:159px;height:23px"><span>3</span></div>
<div class="c" style="left:257px;top:506px;width:166px;height:23px"><span>HDX-20260315-0003</span></div>
<div class="c" style="left:424px;top:506px;width:117px;height:23px"><span>15/03/2026</span></div>
<div class="c" style="left:542px;top:506px;width:186px;height:23px"><span>3</span></div>
<div class="c" style="left:729px;top:506px;width:184px;height:23px"><span>Lê Thị Ngọc Mai</span></div>
<div class="c" style="left:914px;top:506px;width:133px;height:23px"><span>0908234567</span></div>
<div class="c" style="left:1048px;top:506px;width:100px;height:23px"><span>3</span></div>
<div class="c" style="left:1149px;top:506px;width:117px;height:23px"><span>XE03</span></div>
<div class="c" style="left:1267px;top:506px;width:117px;height:23px"><span>66F1-234.56</span></div>
<div class="c" style="left:1855px;top:506px;width:51px;height:23px;justify-content:flex-start"><span style="padding-left:27px">18/03/2026</span></div>
<div class="c" style="left:97px;top:530px;width:159px;height:23px"><span>4</span></div>
<div class="c" style="left:257px;top:530px;width:166px;height:23px"><span>HDX-20260210-0004</span></div>
<div class="c" style="left:424px;top:530px;width:117px;height:23px"><span>10/02/2026</span></div>
<div class="c" style="left:542px;top:530px;width:186px;height:23px"><span>4</span></div>
<div class="c" style="left:729px;top:530px;width:184px;height:23px"><span>Phạm Quốc Bảo</span></div>
<div class="c" style="left:914px;top:530px;width:133px;height:23px"><span>0937123456</span></div>
<div class="c" style="left:1048px;top:530px;width:100px;height:23px"><span>4</span></div>
<div class="c" style="left:1149px;top:530px;width:117px;height:23px"><span>XE04</span></div>
<div class="c" style="left:1267px;top:530px;width:117px;height:23px"><span>67M1-345.67</span></div>
<div class="c" style="left:1855px;top:530px;width:51px;height:23px;justify-content:flex-start"><span style="padding-left:27px">10/02/2026</span></div>
<div class="c" style="left:97px;top:554px;width:159px;height:23px"><span>5</span></div>
<div class="c" style="left:257px;top:554px;width:166px;height:23px"><span>HDX-20260118-0005</span></div>
<div class="c" style="left:424px;top:554px;width:117px;height:23px"><span>18/01/2026</span></div>
<div class="c" style="left:542px;top:554px;width:186px;height:23px"><span>5</span></div>
<div class="c" style="left:729px;top:554px;width:184px;height:23px"><span>Võ Thanh Tùng</span></div>
<div class="c" style="left:914px;top:554px;width:133px;height:23px"><span>0987654321</span></div>
<div class="c" style="left:1048px;top:554px;width:100px;height:23px"><span>5</span></div>
<div class="c" style="left:1149px;top:554px;width:117px;height:23px"><span>XE05</span></div>
<div class="c" style="left:1267px;top:554px;width:117px;height:23px"><span>68C1-456.78</span></div>
<div class="c" style="left:1855px;top:554px;width:51px;height:23px;justify-content:flex-start"><span style="padding-left:27px">20/01/2026</span></div>
<div class="c" style="left:97px;top:578px;width:159px;height:23px"><span>6</span></div>
<div class="c" style="left:257px;top:578px;width:166px;height:23px"><span>HDX-20260315-0006</span></div>
<div class="c" style="left:424px;top:578px;width:117px;height:23px"><span>15/03/2026</span></div>
<div class="c" style="left:542px;top:578px;width:186px;height:23px"><span>6</span></div>
<div class="c" style="left:729px;top:578px;width:184px;height:23px"><span>Đặng Khánh Linh</span></div>
<div class="c" style="left:914px;top:578px;width:133px;height:23px"><span>0909123456</span></div>
<div class="c" style="left:1048px;top:578px;width:100px;height:23px"><span>6</span></div>
<div class="c" style="left:1149px;top:578px;width:117px;height:23px"><span>XE06</span></div>
<div class="c" style="left:1267px;top:578px;width:117px;height:23px"><span>51H-678.90</span></div>
<div class="c" style="left:1855px;top:578px;width:51px;height:23px;justify-content:flex-start"><span style="padding-left:27px">15/03/2026</span></div>
<div class="c" style="left:97px;top:602px;width:159px;height:23px"><span>7</span></div>
<div class="c" style="left:257px;top:602px;width:166px;height:23px"><span>HDX-20260301-0007</span></div>
<div class="c" style="left:424px;top:602px;width:117px;height:23px"><span>01/03/2026</span></div>
<div class="c" style="left:542px;top:602px;width:186px;height:23px"><span>7</span></div>
<div class="c" style="left:729px;top:602px;width:184px;height:23px"><span>Hồ Gia Huy</span></div>
<div class="c" style="left:914px;top:602px;width:133px;height:23px"><span>0919988776</span></div>
<div class="c" style="left:1048px;top:602px;width:100px;height:23px"><span>7</span></div>
<div class="c" style="left:1149px;top:602px;width:117px;height:23px"><span>XE07</span></div>
<div class="c" style="left:1267px;top:602px;width:117px;height:23px"><span>51K-789.01</span></div>
<div class="c" style="left:1855px;top:602px;width:51px;height:23px;justify-content:flex-start"><span style="padding-left:27px">01/03/2026</span></div>
<div class="c" style="left:97px;top:626px;width:159px;height:23px"><span>8</span></div>
<div class="c" style="left:257px;top:626px;width:166px;height:23px"><span>HDX-20260307-0008</span></div>
<div class="c" style="left:424px;top:626px;width:117px;height:23px"><span>07/03/2026</span></div>
<div class="c" style="left:542px;top:626px;width:186px;height:23px"><span>8</span></div>
<div class="c" style="left:729px;top:626px;width:184px;height:23px"><span>Bùi Thu Trang</span></div>
<div class="c" style="left:914px;top:626px;width:133px;height:23px"><span>0944556677</span></div>
<div class="c" style="left:1048px;top:626px;width:100px;height:23px"><span>8</span></div>
<div class="c" style="left:1149px;top:626px;width:117px;height:23px"><span>XE08</span></div>
<div class="c" style="left:1267px;top:626px;width:117px;height:23px"><span>43A-135.79</span></div>
<div class="c" style="left:1855px;top:626px;width:51px;height:23px;justify-content:flex-start"><span style="padding-left:27px">07/03/2026</span></div>
<div class="c" style="left:97px;top:650px;width:159px;height:23px"><span>9</span></div>
<div class="c" style="left:257px;top:650px;width:166px;height:23px"><span>HDX-20260314-0009</span></div>
<div class="c" style="left:424px;top:650px;width:117px;height:23px"><span>14/03/2026</span></div>
<div class="c" style="left:542px;top:650px;width:186px;height:23px"><span>9</span></div>
<div class="c" style="left:729px;top:650px;width:184px;height:23px"><span>Nguyễn Nhật Nam</span></div>
<div class="c" style="left:914px;top:650px;width:133px;height:23px"><span>0977332211</span></div>
<div class="c" style="left:1048px;top:650px;width:100px;height:23px"><span>9</span></div>
<div class="c" style="left:1149px;top:650px;width:117px;height:23px"><span>XE09</span></div>
<div class="c" style="left:1267px;top:650px;width:117px;height:23px"><span>61C-246.80</span></div>
<div class="c" style="left:1855px;top:650px;width:51px;height:23px;justify-content:flex-start"><span style="padding-left:27px">20/03/2026</span></div>
<div class="c" style="left:97px;top:674px;width:159px;height:23px"><span>10</span></div>
<div class="c" style="left:257px;top:674px;width:166px;height:23px"><span>HDX-20260228-0010</span></div>
<div class="c" style="left:424px;top:674px;width:117px;height:23px"><span>28/02/2026</span></div>
<div class="c" style="left:542px;top:674px;width:186px;height:23px"><span>10</span></div>
<div class="c" style="left:729px;top:674px;width:184px;height:23px"><span>Trương Mỹ Duyên</span></div>
<div class="c" style="left:914px;top:674px;width:133px;height:23px"><span>0966123789</span></div>
<div class="c" style="left:1048px;top:674px;width:100px;height:23px"><span>10</span></div>
<div class="c" style="left:1149px;top:674px;width:117px;height:23px"><span>XE10</span></div>
<div class="c" style="left:1267px;top:674px;width:117px;height:23px"><span>51G-357.91</span></div>
<div class="c" style="left:1855px;top:674px;width:51px;height:23px;justify-content:flex-start"><span style="padding-left:27px">28/02/2026</span></div>
<div class="c" style="left:97px;top:698px;width:159px;height:24px"><span>11</span></div>
<div class="c" style="left:257px;top:698px;width:166px;height:24px"><span>HDX-20260125-0011</span></div>
<div class="c" style="left:424px;top:698px;width:117px;height:24px"><span>25/01/2026</span></div>
<div class="c" style="left:542px;top:698px;width:186px;height:24px"><span>2</span></div>
<div class="c" style="left:729px;top:698px;width:184px;height:24px"><span>Trần Minh Quân</span></div>
<div class="c" style="left:914px;top:698px;width:133px;height:24px"><span>0912345678</span></div>
<div class="c" style="left:1048px;top:698px;width:100px;height:24px"><span>12</span></div>
<div class="c" style="left:1149px;top:698px;width:117px;height:24px"><span>XE12</span></div>
<div class="c" style="left:1267px;top:698px;width:117px;height:24px"><span>83P1-579.13</span></div>
<div class="c" style="left:1855px;top:698px;width:51px;height:24px;justify-content:flex-start"><span style="padding-left:27px">25/01/2026</span></div>
<div class="c" style="left:97px;top:723px;width:159px;height:24px"><span>12</span></div>
<div class="c" style="left:257px;top:723px;width:166px;height:24px"><span>HDX-20260214-0012</span></div>
<div class="c" style="left:424px;top:723px;width:117px;height:24px"><span>14/02/2026</span></div>
<div class="c" style="left:542px;top:723px;width:186px;height:24px"><span>11</span></div>
<div class="c" style="left:729px;top:723px;width:184px;height:24px"><span>Phan Hoàng Sơn</span></div>
<div class="c" style="left:914px;top:723px;width:133px;height:24px"><span>0933555777</span></div>
<div class="c" style="left:1048px;top:723px;width:100px;height:24px"><span>13</span></div>
<div class="c" style="left:1149px;top:723px;width:117px;height:24px"><span>XE13</span></div>
<div class="c" style="left:1267px;top:723px;width:117px;height:24px"><span>51F-680.24</span></div>
<div class="c" style="left:1855px;top:723px;width:51px;height:24px;justify-content:flex-start"><span style="padding-left:27px">14/02/2026</span></div>
<div class="c" style="left:97px;top:748px;width:159px;height:24px"><span>13</span></div>
<div class="c" style="left:257px;top:748px;width:166px;height:24px"><span>HDX-20260305-0013</span></div>
<div class="c" style="left:424px;top:748px;width:117px;height:24px"><span>05/03/2026</span></div>
<div class="c" style="left:542px;top:748px;width:186px;height:24px"><span>12</span></div>
<div class="c" style="left:729px;top:748px;width:184px;height:24px"><span>Đỗ Quỳnh Anh</span></div>
<div class="c" style="left:914px;top:748px;width:133px;height:24px"><span>0904455667</span></div>
<div class="c" style="left:1048px;top:748px;width:100px;height:24px"><span>14</span></div>
<div class="c" style="left:1149px;top:748px;width:117px;height:24px"><span>XE14</span></div>
<div class="c" style="left:1267px;top:748px;width:117px;height:24px"><span>84B2-791.35</span></div>
<div class="c" style="left:1855px;top:748px;width:51px;height:24px;justify-content:flex-start"><span style="padding-left:27px">05/03/2026</span></div>
<div class="c" style="left:97px;top:773px;width:159px;height:24px"><span>14</span></div>
<div class="c" style="left:257px;top:773px;width:166px;height:24px"><span>HDX-20260112-0014</span></div>
<div class="c" style="left:424px;top:773px;width:117px;height:24px"><span>12/01/2026</span></div>
<div class="c" style="left:542px;top:773px;width:186px;height:24px"><span>3</span></div>
<div class="c" style="left:729px;top:773px;width:184px;height:24px"><span>Lê Thị Ngọc Mai</span></div>
<div class="c" style="left:914px;top:773px;width:133px;height:24px"><span>0908234567</span></div>
<div class="c" style="left:1048px;top:773px;width:100px;height:24px"><span>15</span></div>
<div class="c" style="left:1149px;top:773px;width:117px;height:24px"><span>XE15</span></div>
<div class="c" style="left:1267px;top:773px;width:117px;height:24px"><span>85F1-802.46</span></div>
<div class="c" style="left:1855px;top:773px;width:51px;height:24px;justify-content:flex-start"><span style="padding-left:27px">12/01/2026</span></div>
<div class="c" style="left:97px;top:798px;width:159px;height:24px"><span>15</span></div>
<div class="c" style="left:257px;top:798px;width:166px;height:24px"><span>HDX-20260310-0015</span></div>
<div class="c" style="left:424px;top:798px;width:117px;height:24px"><span>10/03/2026</span></div>
<div class="c" style="left:542px;top:798px;width:186px;height:24px"><span>4</span></div>
<div class="c" style="left:729px;top:798px;width:184px;height:24px"><span>Phạm Quốc Bảo</span></div>
<div class="c" style="left:914px;top:798px;width:133px;height:24px"><span>0937123456</span></div>
<div class="c" style="left:1048px;top:798px;width:100px;height:24px"><span>2</span></div>
<div class="c" style="left:1149px;top:798px;width:117px;height:24px"><span>XE02</span></div>
<div class="c" style="left:1267px;top:798px;width:117px;height:24px"><span>65B1-123.45</span></div>
<div class="c" style="left:1855px;top:798px;width:51px;height:24px;justify-content:flex-start"><span style="padding-left:27px">10/03/2026</span></div>
<div class="c" style="left:97px;top:823px;width:159px;height:24px"><span>16</span></div>
<div class="c" style="left:257px;top:823px;width:166px;height:24px"><span>HDX-20260401-0016</span></div>
<div class="c" style="left:424px;top:823px;width:117px;height:24px"><span>01/04/2026</span></div>
<div class="c" style="left:542px;top:823px;width:186px;height:24px"><span>2</span></div>
<div class="c" style="left:729px;top:823px;width:184px;height:24px"><span>Trần Minh Quân</span></div>
<div class="c" style="left:914px;top:823px;width:133px;height:24px"><span>0912345678</span></div>
<div class="c" style="left:1048px;top:823px;width:100px;height:24px"><span>7</span></div>
<div class="c" style="left:1149px;top:823px;width:117px;height:24px"><span>XE07</span></div>
<div class="c" style="left:1267px;top:823px;width:117px;height:24px"><span>51K-789.01</span></div>
<div class="c" style="left:1855px;top:823px;width:51px;height:24px;justify-content:flex-start"><span style="padding-left:27px">03/04/2026</span></div>
<div class="c" style="left:97px;top:848px;width:159px;height:24px"><span>17</span></div>
<div class="c" style="left:257px;top:848px;width:166px;height:24px"><span>HDX-20260120-0017</span></div>
<div class="c" style="left:424px;top:848px;width:117px;height:24px"><span>20/01/2026</span></div>
<div class="c" style="left:542px;top:848px;width:186px;height:24px"><span>5</span></div>
<div class="c" style="left:729px;top:848px;width:184px;height:24px"><span>Võ Thanh Tùng</span></div>
<div class="c" style="left:914px;top:848px;width:133px;height:24px"><span>0987654321</span></div>
<div class="c" style="left:1048px;top:848px;width:100px;height:24px"><span>10</span></div>
<div class="c" style="left:1149px;top:848px;width:117px;height:24px"><span>XE10</span></div>
<div class="c" style="left:1267px;top:848px;width:117px;height:24px"><span>51G-357.91</span></div>
<div class="c" style="left:1855px;top:848px;width:51px;height:24px;justify-content:flex-start"><span style="padding-left:27px">20/01/2026</span></div>
<div class="c" style="left:97px;top:873px;width:159px;height:24px"><span>18</span></div>
<div class="c" style="left:257px;top:873px;width:166px;height:24px"><span>HDX-20260220-0018</span></div>
<div class="c" style="left:424px;top:873px;width:117px;height:24px"><span>20/02/2026</span></div>
<div class="c" style="left:542px;top:873px;width:186px;height:24px"><span>6</span></div>
<div class="c" style="left:729px;top:873px;width:184px;height:24px"><span>Đặng Khánh Linh</span></div>
<div class="c" style="left:914px;top:873px;width:133px;height:24px"><span>0909123456</span></div>
<div class="c" style="left:1048px;top:873px;width:100px;height:24px"><span>13</span></div>
<div class="c" style="left:1149px;top:873px;width:117px;height:24px"><span>XE13</span></div>
<div class="c" style="left:1267px;top:873px;width:117px;height:24px"><span>51F-680.24</span></div>
<div class="c" style="left:1855px;top:873px;width:51px;height:24px;justify-content:flex-start"><span style="padding-left:27px">20/02/2026</span></div>
<div class="c" style="left:97px;top:898px;width:159px;height:24px"><span>19</span></div>
<div class="c" style="left:257px;top:898px;width:166px;height:24px"><span>HDX-20260115-0019</span></div>
<div class="c" style="left:424px;top:898px;width:117px;height:24px"><span>15/01/2026</span></div>
<div class="c" style="left:542px;top:898px;width:186px;height:24px"><span>7</span></div>
<div class="c" style="left:729px;top:898px;width:184px;height:24px"><span>Hồ Gia Huy</span></div>
<div class="c" style="left:914px;top:898px;width:133px;height:24px"><span>0919988776</span></div>
<div class="c" style="left:1048px;top:898px;width:100px;height:24px"><span>4</span></div>
<div class="c" style="left:1149px;top:898px;width:117px;height:24px"><span>XE04</span></div>
<div class="c" style="left:1267px;top:898px;width:117px;height:24px"><span>67M1-345.67</span></div>
<div class="c" style="left:1855px;top:898px;width:51px;height:24px;justify-content:flex-start"><span style="padding-left:27px">15/01/2026</span></div>
<div class="c" style="left:97px;top:923px;width:159px;height:24px"><span>20</span></div>
<div class="c" style="left:257px;top:923px;width:166px;height:24px"><span>HDX-20260308-0020</span></div>
<div class="c" style="left:424px;top:923px;width:117px;height:24px"><span>08/03/2026</span></div>
<div class="c" style="left:542px;top:923px;width:186px;height:24px"><span>8</span></div>
<div class="c" style="left:729px;top:923px;width:184px;height:24px"><span>Bùi Thu Trang</span></div>
<div class="c" style="left:914px;top:923px;width:133px;height:24px"><span>0944556677</span></div>
<div class="c" style="left:1048px;top:923px;width:100px;height:24px"><span>12</span></div>
<div class="c" style="left:1149px;top:923px;width:117px;height:24px"><span>XE12</span></div>
<div class="c" style="left:1267px;top:923px;width:117px;height:24px"><span>83P1-579.13</span></div>
<div class="c" style="left:1855px;top:923px;width:51px;height:24px;justify-content:flex-start"><span style="padding-left:27px">08/03/2026</span></div>
<div class="c" style="left:97px;top:948px;width:159px;height:24px"><span>21</span></div>
<div class="c" style="left:257px;top:948px;width:166px;height:24px"><span>HDX-20260301-0021</span></div>
<div class="c" style="left:424px;top:948px;width:117px;height:24px"><span>01/03/2026</span></div>
<div class="c" style="left:542px;top:948px;width:186px;height:24px"><span>13</span></div>
<div class="c" style="left:729px;top:948px;width:184px;height:24px"><span>Mai Đức Thành</span></div>
<div class="c" style="left:914px;top:948px;width:133px;height:24px"><span>0988112233</span></div>
<div class="c" style="left:1048px;top:948px;width:100px;height:24px"><span>15</span></div>
<div class="c" style="left:1149px;top:948px;width:117px;height:24px"><span>XE15</span></div>
<div class="c" style="left:1267px;top:948px;width:117px;height:24px"><span>85F1-802.46</span></div>
<div class="c" style="left:1855px;top:948px;width:51px;height:24px;justify-content:flex-start"><span style="padding-left:27px">01/03/2026</span></div>
<div class="abs" style="left:97px;top:481px;width:1809px;height:1px;background:repeating-linear-gradient(90deg,#000 0 2px,transparent 2px 4px)"></div>
<div class="abs" style="left:97px;top:505px;width:1809px;height:1px;background:repeating-linear-gradient(90deg,#000 0 2px,transparent 2px 4px)"></div>
<div class="abs" style="left:97px;top:529px;width:1809px;height:1px;background:repeating-linear-gradient(90deg,#000 0 2px,transparent 2px 4px)"></div>
<div class="abs" style="left:97px;top:553px;width:1809px;height:1px;background:repeating-linear-gradient(90deg,#000 0 2px,transparent 2px 4px)"></div>
<div class="abs" style="left:97px;top:577px;width:1809px;height:1px;background:repeating-linear-gradient(90deg,#000 0 2px,transparent 2px 4px)"></div>
<div class="abs" style="left:97px;top:601px;width:1809px;height:1px;background:repeating-linear-gradient(90deg,#000 0 2px,transparent 2px 4px)"></div>
<div class="abs" style="left:97px;top:625px;width:1809px;height:1px;background:repeating-linear-gradient(90deg,#000 0 2px,transparent 2px 4px)"></div>
<div class="abs" style="left:97px;top:649px;width:1809px;height:1px;background:repeating-linear-gradient(90deg,#000 0 2px,transparent 2px 4px)"></div>
<div class="abs" style="left:97px;top:673px;width:1809px;height:1px;background:repeating-linear-gradient(90deg,#000 0 2px,transparent 2px 4px)"></div>
<div class="abs" style="left:97px;top:697px;width:1809px;height:1px;background:repeating-linear-gradient(90deg,#000 0 2px,transparent 2px 4px)"></div>
<div class="abs" style="left:97px;top:722px;width:1809px;height:1px;background:repeating-linear-gradient(90deg,#000 0 2px,transparent 2px 4px)"></div>
<div class="abs" style="left:97px;top:747px;width:1809px;height:1px;background:repeating-linear-gradient(90deg,#000 0 2px,transparent 2px 4px)"></div>
<div class="abs" style="left:97px;top:772px;width:1809px;height:1px;background:repeating-linear-gradient(90deg,#000 0 2px,transparent 2px 4px)"></div>
<div class="abs" style="left:97px;top:797px;width:1809px;height:1px;background:repeating-linear-gradient(90deg,#000 0 2px,transparent 2px 4px)"></div>
<div class="abs" style="left:97px;top:822px;width:1809px;height:1px;background:repeating-linear-gradient(90deg,#000 0 2px,transparent 2px 4px)"></div>
<div class="abs" style="left:97px;top:847px;width:1809px;height:1px;background:repeating-linear-gradient(90deg,#000 0 2px,transparent 2px 4px)"></div>
<div class="abs" style="left:97px;top:872px;width:1809px;height:1px;background:repeating-linear-gradient(90deg,#000 0 2px,transparent 2px 4px)"></div>
<div class="abs" style="left:97px;top:897px;width:1809px;height:1px;background:repeating-linear-gradient(90deg,#000 0 2px,transparent 2px 4px)"></div>
<div class="abs" style="left:97px;top:922px;width:1809px;height:1px;background:repeating-linear-gradient(90deg,#000 0 2px,transparent 2px 4px)"></div>
<div class="abs" style="left:97px;top:947px;width:1809px;height:1px;background:repeating-linear-gradient(90deg,#000 0 2px,transparent 2px 4px)"></div>
<div class="abs" style="left:97px;top:972px;width:1809px;height:1px;background:repeating-linear-gradient(90deg,#000 0 2px,transparent 2px 4px)"></div>
<div class="abs" style="left:97px;top:997px;width:1809px;height:1px;background:repeating-linear-gradient(90deg,#000 0 2px,transparent 2px 4px)"></div>
<div class="abs" style="left:256px;top:458px;width:1px;height:562px;background:repeating-linear-gradient(180deg,#000 0 2px,transparent 2px 4px)"></div>
<div class="abs" style="left:423px;top:458px;width:1px;height:562px;background:repeating-linear-gradient(180deg,#000 0 2px,transparent 2px 4px)"></div>
<div class="abs" style="left:541px;top:458px;width:1px;height:562px;background:repeating-linear-gradient(180deg,#000 0 2px,transparent 2px 4px)"></div>
<div class="abs" style="left:728px;top:458px;width:1px;height:562px;background:repeating-linear-gradient(180deg,#000 0 2px,transparent 2px 4px)"></div>
<div class="abs" style="left:913px;top:458px;width:1px;height:562px;background:repeating-linear-gradient(180deg,#000 0 2px,transparent 2px 4px)"></div>
<div class="abs" style="left:1047px;top:458px;width:1px;height:562px;background:repeating-linear-gradient(180deg,#000 0 2px,transparent 2px 4px)"></div>
<div class="abs" style="left:1148px;top:458px;width:1px;height:562px;background:repeating-linear-gradient(180deg,#000 0 2px,transparent 2px 4px)"></div>
<div class="abs" style="left:1266px;top:458px;width:1px;height:562px;background:repeating-linear-gradient(180deg,#000 0 2px,transparent 2px 4px)"></div>
<div class="abs" style="left:1384px;top:458px;width:1px;height:562px;background:repeating-linear-gradient(180deg,#000 0 2px,transparent 2px 4px)"></div>
<div class="abs" style="left:1618px;top:458px;width:1px;height:562px;background:repeating-linear-gradient(180deg,#000 0 2px,transparent 2px 4px)"></div>
<div class="abs" style="left:1736px;top:458px;width:1px;height:562px;background:repeating-linear-gradient(180deg,#000 0 2px,transparent 2px 4px)"></div>
<div class="abs" style="left:1854px;top:458px;width:1px;height:562px;background:repeating-linear-gradient(180deg,#000 0 2px,transparent 2px 4px)"></div>
<div class="abs" style="left:728px;top:772px;width:186px;height:26px;border:2px solid #1a73e8"></div>
<div class="abs" style="left:908px;top:792px;width:11px;height:11px;border-radius:50%;background:#0b57d0;border:1px solid #fff"></div>
<div class="abs" style="left:1906px;top:170px;width:1px;height:850px;background:#c4c4c4"></div>
<div class="abs" style="left:1907px;top:170px;width:13px;height:283px;background:#f8f8f8"></div>
<div class="abs" style="left:1907px;top:453px;width:13px;height:5px;background:#e2e4e8"></div>
<div class="abs" style="left:1907px;top:458px;width:13px;height:524px;background:#fff"></div>
<div class="abs" style="left:1908px;top:459px;width:11px;height:32px;border-radius:6px;background:#dadce0"></div>
<div class="abs" style="left:1907px;top:982px;width:13px;height:38px;background:#f8f8f8"></div>
<div class="abs" style="left:1907px;top:982px;width:13px;height:1px;background:#e0e0e0"></div>
<div class="abs" style="left:1907px;top:1001px;width:13px;height:1px;background:#e0e0e0"></div>
<div class="abs" style="left:1910px;top:989px;width:0;height:0;border-left:3.5px solid transparent;border-right:3.5px solid transparent;border-bottom:4px solid #a8a8a8"></div>
<div class="abs" style="left:1910px;top:1009px;width:0;height:0;border-left:3.5px solid transparent;border-right:3.5px solid transparent;border-top:4px solid #a8a8a8"></div>
<div class="abs" style="left:0;top:1020px;width:1920px;height:15px;background:#fff"></div>
<div class="abs" style="left:0;top:1021px;width:54px;height:14px;background:#f8f8f8"></div>
<div class="abs" style="left:1869px;top:1021px;width:51px;height:14px;background:#f8f8f8"></div>
<div class="abs" style="left:0;top:1020px;width:1920px;height:1px;background:#e1e3e1"></div>
<div class="abs" style="left:54px;top:1020px;width:1px;height:15px;background:#e3e3e3"></div>
<div class="abs" style="left:57px;top:1022px;width:494px;height:11px;border-radius:6px;background:#dadada"></div>
<div class="abs" style="left:0;top:1035px;width:1920px;height:1px;background:#e1e3e1"></div>
<div class="abs" style="left:1868px;top:1021px;width:1px;height:14px;background:#e3e3e3"></div>
<div class="abs" style="left:1887px;top:1021px;width:1px;height:14px;background:#e3e3e3"></div>
<div class="abs" style="left:1906px;top:1021px;width:1px;height:14px;background:#e3e3e3"></div>
<div class="abs" style="left:1875px;top:1024px;width:0;height:0;border-top:3.5px solid transparent;border-bottom:3.5px solid transparent;border-right:4px solid #a8a8a8"></div>
<div class="abs" style="left:1895px;top:1024px;width:0;height:0;border-top:3.5px solid transparent;border-bottom:3.5px solid transparent;border-left:4px solid #a8a8a8"></div>
<div class="abs" style="left:0;top:1036px;width:1920px;height:44px;background:#f9fbfd"></div>
<div class="abs" style="left:67.2px;top:1057px;width:12.5px;height:2px;background:#444746"></div><div class="abs" style="left:72.45px;top:1051.8px;width:2px;height:12.5px;background:#444746"></div>
<svg style="position:absolute;left:109px;top:1046px" width="24" height="24" viewBox="0 0 24 24"><path fill="#444746" d="M3 18h18v-2H3v2zm0-5h18v-2H3v2zm0-7v2h18V6H3z"/></svg>
<div class="t" style="left:175px;top:1049.5px;font-size:18px;color:#444746;font-weight:normal;-webkit-text-stroke:0.35px #444746;letter-spacing:0.35px">Thiết lập</div>
<div style="position:absolute;left:261.7px;top:1056.5px;width:0;height:0;border-left:5.0px solid transparent;border-right:5.0px solid transparent;border-top:5.0px solid #444746"></div>
<div class="abs" style="left:160px;top:1075px;width:125px;height:4px;background:#cc4125"></div>
<div class="t" style="left:301px;top:1049.5px;font-size:18px;color:#444746;font-weight:normal;-webkit-text-stroke:0.35px #444746;letter-spacing:0">Danh sách xe</div>
<div style="position:absolute;left:425.0px;top:1056.5px;width:0;height:0;border-left:5.0px solid transparent;border-right:5.0px solid transparent;border-top:5.0px solid #444746"></div>
<div class="abs" style="left:286px;top:1075px;width:163px;height:4px;background:#38761d"></div>
<div class="t" style="left:465px;top:1049.5px;font-size:18px;color:#444746;font-weight:normal;-webkit-text-stroke:0.35px #444746;letter-spacing:0">Khách hàng</div>
<div style="position:absolute;left:575.0px;top:1056.5px;width:0;height:0;border-left:5.0px solid transparent;border-right:5.0px solid transparent;border-top:5.0px solid #444746"></div>
<div class="abs" style="left:450px;top:1075px;width:150px;height:4px;background:#45818e"></div>
<div class="abs" style="left:600px;top:1036px;width:208px;height:44px;background:#e1e9f7"></div>
<div class="t" style="left:612.5px;top:1050px;font-size:17.5px;color:#0b57d0;font-weight:bold;">Hợp đồng booking</div>
<div style="position:absolute;left:783.5px;top:1056.5px;width:0;height:0;border-left:5.0px solid transparent;border-right:5.0px solid transparent;border-top:5.0px solid #0b57d0"></div>
<div class="abs" style="left:600px;top:1075px;width:208px;height:4px;background:#f1c232"></div>
<div class="t" style="left:821.5px;top:1049.5px;font-size:18px;color:#444746;font-weight:normal;-webkit-text-stroke:0.35px #444746;letter-spacing:0">Chi phí và bảo dưỡng</div>
<div style="position:absolute;left:1011.0px;top:1056.5px;width:0;height:0;border-left:5.0px solid transparent;border-right:5.0px solid transparent;border-top:5.0px solid #444746"></div>
<div class="abs" style="left:808px;top:1075px;width:228px;height:4px;background:#0000ff"></div>
<svg style="position:absolute;left:1874px;top:1049px" width="24" height="24" viewBox="0 0 24 24"><path fill="#444746" d="M15.41 7.41L14 6l-6 6 6 6 1.41-1.41L10.83 12z"/></svg>
</body></html>
